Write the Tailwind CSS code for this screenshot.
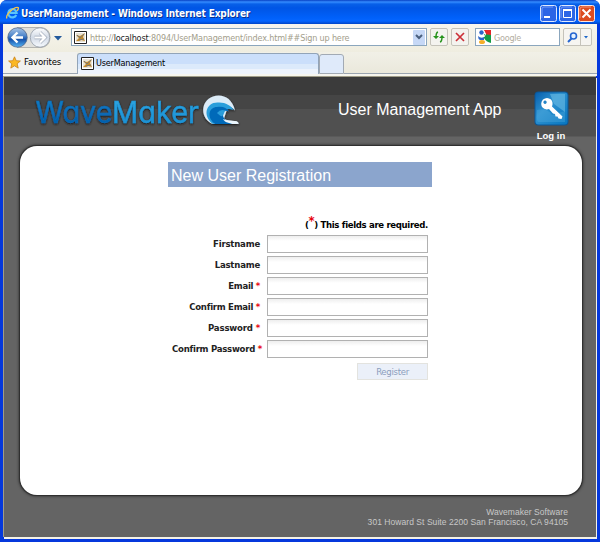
<!DOCTYPE html>
<html lang="en">
<head>
<meta charset="utf-8">
<title>UserManagement</title>
<script src="https://cdn.jsdelivr.net/npm/@tailwindcss/browser@4"></script>
</head>
<body class="w-[600px] h-[542px] overflow-hidden bg-white">
<svg class="hidden">
  <defs>
    <symbol id="ie" viewBox="0 0 14 14">
      <path d="M11 9.2A4.500 4.500 0 1 1 11.400 6.800H4" fill="none" stroke="#5bc4fa" stroke-width="2.400"/>
      <path d="M1 13C-1 9 9 0 13 1.200c1 .8-.2 2.400-1.200 3.300" fill="none" stroke="#f3c34c" stroke-width="1.400"/>
    </symbol>
    <symbol id="page" viewBox="0 0 13 13">
      <path d="M.5.5h12v12H.5z" fill="#fff" stroke="#222"/>
      <path d="M2 2h9v9H2z" fill="#e7e2d5"/>
      <path d="M2 10l3-3-3-3 4 1 5-3-2 4 2 4-4-1-2 1z" fill="#c58b28"/>
      <path d="M3 4l3 3 4-4M5 9l5-1" fill="none" stroke="#777" stroke-width="1"/>
    </symbol>
  </defs>
</svg>
<div class="w-[600px] h-[542px] flex flex-col rounded-t-[7px] overflow-hidden bg-[#0831d9] font-['DejaVu_Sans_Condensed','Noto_Sans',sans-serif]">
  <!-- Title bar -->
  <header class="h-6 shrink-0 flex items-center pl-[6px] pr-[5px] bg-[linear-gradient(#0741c4_0,#358cff_2px,#0860e8_4px,#0055e5_8px,#0061fb_18px,#0666ff_21px,#0145c8_24px)]">
    <svg class="w-[13px] h-[14px] mt-[2px]"><use href="#ie"/></svg>
    <h1 class="ml-[2px] mt-[4px] text-[10px] leading-none font-bold text-white whitespace-nowrap -tracking-[0.150px] [text-shadow:1px_1px_0_#0a2f8c]">UserManagement - Windows Internet Explorer</h1>
    <div class="ml-auto mt-[3px] flex gap-[2px]">
      <svg class="w-[17px] h-[17px]" viewBox="0 0 17 17"><rect x=".5" y=".5" width="16" height="16" rx="2" fill="#2c65e6" stroke="#dfe9ff"/><path d="M2 13V4q0-2 2-2h9" fill="none" stroke="#739cf6"/><path d="M4 11h6v2H4z" fill="#fff"/></svg>
      <svg class="w-[17px] h-[17px]" viewBox="0 0 17 17"><rect x=".5" y=".5" width="16" height="16" rx="2" fill="#2c65e6" stroke="#dfe9ff"/><path d="M2 13V4q0-2 2-2h9" fill="none" stroke="#739cf6"/><path d="M4.500 4.500h8v8h-8z" fill="none" stroke="#fff"/><path d="M4 4h9v2H4z" fill="#fff"/></svg>
      <svg class="w-[17px] h-[17px]" viewBox="0 0 17 17"><rect x=".5" y=".5" width="16" height="16" rx="2" fill="#dc4c20" stroke="#ffe5dd"/><path d="M2 13V4q0-2 2-2h9" fill="none" stroke="#ef9274"/><path d="M4.500 4.500l8 8M12.500 4.500l-8 8" stroke="#fff" stroke-width="2"/></svg>
    </div>
  </header>
  <div class="flex-1 min-h-0 flex flex-col border-x-[3px] border-b-[3px] border-[#0538dc]">
    <!-- Address bar -->
    <div class="h-[28px] shrink-0 flex items-start pt-[4px] pl-[4px] pr-[5px] bg-[linear-gradient(#f8f6ee,#efede0)]">
      <svg class="w-[54px] h-[22px] -mt-[1px]" viewBox="0 0 54 22">
        <defs>
          <linearGradient id="b1" x2="0" y2="1"><stop stop-color="#a8c4e6"/><stop offset=".4" stop-color="#5288cc"/><stop offset=".6" stop-color="#1653ac"/><stop offset="1" stop-color="#58b6f4"/></linearGradient>
          <linearGradient id="b2" x2="0" y2="1"><stop stop-color="#fff"/><stop offset=".5" stop-color="#d2dae6"/><stop offset="1" stop-color="#f7fafe"/></linearGradient>
        </defs>
        <path d="M10 .5h24q9 1 9 10t-9 10H10" fill="#e0e0dc" stroke="#b4b4b0"/>
        <circle cx="10.500" cy="10.500" r="9.700" fill="url(#b1)" stroke="#4c648c" stroke-width=".8"/>
        <circle cx="33" cy="10.500" r="9.700" fill="url(#b2)" stroke="#929caa" stroke-width=".8"/>
        <path d="M16 10.500H6M10.500 5.500l-5 5 5 5" fill="none" stroke="#fff" stroke-width="2.400"/>
        <path d="M27.500 10.500h10M33 5.500l5 5-5 5" fill="none" stroke="#9ca6b6" stroke-width="3.400"/>
        <path d="M27.500 10.500h10M33 5.500l5 5-5 5" fill="none" stroke="#fff" stroke-width="2.200"/>
      </svg>
      <svg class="-ml-[7px] mt-[8px] w-[8px] h-[5px]" viewBox="0 0 8 5"><path d="M0 0h8L4 4.600z" fill="#245a9c"/></svg>
      <div class="ml-[9px] w-[356px] h-[18px] border border-[#8ba6bd] bg-white flex items-center pl-[2px] text-[9px] text-[#a39e8b] whitespace-nowrap">
        <svg class="w-[13px] h-[13px]"><use href="#page"/></svg>
        <span class="ml-[3px] mt-[2px] leading-none -tracking-[0.170px]">http://<span class="text-[#222]">localhost</span>:8094/UserManagement/index.html##Sign up here</span>
        <span class="ml-auto mr-[1px] w-[12px] h-[15px] rounded-[1px] bg-[#c6d8f6] flex items-center justify-center"><svg class="w-[8px] h-[6px]" viewBox="0 0 8 6"><path d="M1 1l3 3 3-3" fill="none" stroke="#4a607e" stroke-width="2"/></svg></span>
      </div>
      <div class="ml-[3px] w-[18px] h-[18px] rounded-[2px] border border-[#c5c3ba] bg-[#f4f3ef] flex items-center justify-center">
        <svg class="w-[12px] h-[12px]" viewBox="0 0 12 12"><path d="M5 1Q3 1.500 3 6M7 11q2-.5 2-5" fill="none" stroke="#27941c" stroke-width="1.500"/><path d="M0 5h6L3 8zM6 7h6L9 4z" fill="#27941c"/></svg>
      </div>
      <div class="ml-[3px] w-[18px] h-[18px] rounded-[2px] border border-[#c5c3ba] bg-[#f4f3ef] flex items-center justify-center">
        <svg class="w-[10px] h-[10px]" viewBox="0 0 10 10"><path d="M1 1l8 8M9 1L1 9" stroke="#cc3038" stroke-width="1.700"/></svg>
      </div>
      <div class="ml-[6px] w-[85px] h-[18px] border border-[#8ba6bd] bg-white flex items-center pl-[2px] text-[9px] text-[#b2ada0]">
        <svg class="w-[13px] h-[14px]" viewBox="0 0 13 14"><path d="M6 0h7v5H8z" fill="#e42729"/><path d="M6 4l7 1v8q-5-1-7-5z" fill="#149b45"/><circle cx="3.500" cy="2.500" r="2.200" fill="#2a64c8"/><path d="M0 6q3 3 6 1v3H2q-2-1-2-4" fill="#2a64c8"/><ellipse cx="4" cy="12" rx="3" ry="2" fill="#f5ae28"/><path d="M6 1q3 3 0 6" fill="none" stroke="#fff"/></svg>
        <span class="ml-[3px] mt-[2px] leading-none -tracking-[0.250px]">Google</span>
      </div>
      <div class="ml-[3px] w-[29px] h-[18px] rounded-[2px] border border-[#c5c3ba] bg-[#f6f5f1] flex">
        <span class="w-[17px] border-r border-[#c5c3ba] flex items-center justify-center"><svg class="w-[11px] h-[11px]" viewBox="0 0 11 11"><circle cx="6.500" cy="4" r="3" fill="#e4f1ff" stroke="#2565d0" stroke-width="1.600"/><path d="M4.500 6.500L1 10" stroke="#2565d0" stroke-width="2"/></svg></span>
        <span class="flex-1 flex items-center justify-center"><svg class="w-[4px] h-[3px]" viewBox="0 0 4 3"><path d="M0 0h4L2 2.500z" fill="#1d66c8"/></svg></span>
      </div>
    </div>
    <!-- Tab strip -->
    <div class="h-[24px] shrink-0 flex items-end bg-[linear-gradient(#f1f0e7,#eae8db)] text-[9.500px] text-black border-b-2 border-[#f6f5ee]">
      <div class="w-[74px] h-full flex items-center pl-[5px] border-b border-[#9ba5b0] bg-[#f1f1ee]">
        <svg class="w-[13px] h-[13px] -mt-[1px]" viewBox="0 0 13 13"><path d="M6.500.8l1.700 3.900 4.200.3-3.200 2.800 1 4.300-3.700-2.300-3.700 2.300 1-4.300L.6 5l4.200-.3z" fill="#fbb823" stroke="#c98216" stroke-width=".8"/></svg>
        <span class="ml-[3px] -tracking-[0.150px] leading-none -mt-[1px] text-[9.500px]">Favorites</span>
      </div>
      <div class="w-[242px] h-[21px] rounded-t-[3px] border border-b-0 border-[#92a4b8] bg-[linear-gradient(#cbdffb_0_10px,#dceafb_10px_15px,#edf3fc_15px)] flex items-center pl-[3px]">
        <svg class="w-[13px] h-[13px] -mt-[2px]"><use href="#page"/></svg>
        <span class="ml-[2px] -mt-[2px] text-[9px] -tracking-[0.200px] leading-none">UserManagement</span>
      </div>
      <div class="w-[25px] h-[20px] rounded-t-[3px] border border-[#a2aab4] bg-[#dfeafa]"></div>
      <div class="flex-1 h-full border-b border-[#9ba5b0]"></div>
    </div>
    <!-- Web page -->
    <main class="flex-1 min-h-0 flex flex-col mr-[1px] mb-[2px] border-l border-t border-[#a09d88] bg-[linear-gradient(#3b3b3b_0_18px,#454545_18px_32px,#505050_32px_59px,#646464_60px)] [box-shadow:1px_2px_0_#f4f2e8] font-['Liberation_Sans',sans-serif]">
      <div class="h-[69px] shrink-0 flex">
        <svg class="w-[240px] h-[69px]" viewBox="4 77 240 69">
          <defs>
            <linearGradient id="lg1" x2="0" y2="1"><stop stop-color="#1686cc"/><stop offset=".7" stop-color="#0562af"/></linearGradient>
            <linearGradient id="lg2" x2="0" y2="1"><stop stop-color="#31a9e4"/><stop offset="1" stop-color="#168bd0"/></linearGradient>
            <filter id="sh" x="-10%" y="-20%" width="120%" height="140%"><feDropShadow dx="0" dy="1" stdDeviation="1.200" flood-color="#151515"/></filter>
          </defs>
          <g class="[font-feature-settings:'cv11']" filter="url(#sh)" font-family="Inter, sans-serif" font-size="30">
            <text x="35.500" y="123" fill="url(#lg1)" stroke="#0969b4" stroke-width=".5" textLength="77" lengthAdjust="spacingAndGlyphs">Wave</text>
            <text x="112" y="123" fill="url(#lg2)" stroke="#1d93d4" stroke-width=".5" textLength="87" lengthAdjust="spacingAndGlyphs">Maker</text>
          </g>
          <g filter="url(#sh)">
            <path d="M213 124C200 119 200 101 213 96.500c9-3 19 1 22 14-2-2-4-4-7-4l-4 12c5 4 14 1 14.500 4.500v1z" fill="#dcebf7"/>
            <path d="M213 124C202 116 206 102 218 102.500c7-.5 13 3 15.500 7.500-5-2-8-1-9 2l-4 10z" fill="#2a9edb"/>
            <path d="M215 124C206 117 209 107 217 107c6-1 10 1 12 4.500-4-1.500-7-.5-6.500 2.500.5 4 3 7 10 10z" fill="#056bb9"/>
            <path d="M217 113q4-5 9-2-4 0-3 4-1 3-6-2" fill="#2a9edb"/>
            <path d="M223 119c4 3 15 0 15.500 4.500-6 1-14-.5-15.500-4.500" fill="#eaf5fc"/>
          </g>
        </svg>
        <h2 class="ml-[94px] mt-[23px] text-[16px] leading-[20px] text-white whitespace-nowrap -tracking-[0.010px]">User Management App</h2>
        <div class="ml-auto mr-[25px] mt-[14px] w-[40px] flex flex-col items-center">
          <svg class="w-[35px] h-[35px]" viewBox="0 0 35 35">
            <defs><linearGradient id="kg" x2="1" y2="1"><stop stop-color="#075fae"/><stop offset=".4" stop-color="#2d91cf"/><stop offset="1" stop-color="#0876bf"/></linearGradient></defs>
            <rect x=".5" y=".5" width="34" height="34" rx="4" fill="#0b5798"/>
            <rect x="1.500" y="1.500" width="32" height="32" rx="3" fill="url(#kg)"/>
            <path d="M16 3h15v18L20 13z" fill="#65b8e4" opacity=".65"/>
            <path d="M3 19q10-3 15 5l13-4v11H5q-2 0-2-3z" fill="#61b5e3" opacity=".3"/>
            <path fill-rule="evenodd" d="M9 8.500q4-3 8 0 2.500 3 1 7l10.500 10-1 2.500-3-.5-1-2-2 0-.5-2.500-2-.5-4-4.500q-4 1.500-7-2-2-4 1-7.500m2 1a1.700 1.700 0 1 0 .1 0" fill="#fff"/>
          </svg>
          <span class="mt-[4px] text-[9.500px] leading-[11px] font-bold text-white whitespace-nowrap tracking-[0px]">Log in</span>
        </div>
      </div>
      <section class="ml-[16px] mr-[14px] h-[349px] shrink-0 rounded-[17px] bg-white [box-shadow:0_0_0_1px_#303030,0_0_3px_1px_#252525] pl-[148px] pt-[16px]">
        <h3 class="w-[264px] h-[25px] bg-[#8ba5cd] pl-[3px] text-[16px] leading-[27px] text-white whitespace-nowrap tracking-[0px]">New User Registration</h3>
        <form class="w-[260px] mt-[29px] flex flex-col text-[9.500px] font-bold text-[#222] font-['DejaVu_Sans_Condensed',sans-serif] leading-[18px] whitespace-nowrap">
          <p class="h-[19px] text-right text-black -tracking-[0.330px]">(<span class="relative -top-[3px] text-[13px] leading-none text-red-600">*</span>) This fields are required.</p>
          <div class="flex flex-col gap-[3px]">
            <label class="flex h-[18px]"><span class="w-[92px] text-right -tracking-[0.200px]">Firstname</span><input class="ml-auto w-[161px] h-[18px] border border-[#b1b1b1] bg-[linear-gradient(#eeeeee,#fff_5px)]"></label>
            <label class="flex h-[18px]"><span class="w-[92px] text-right -tracking-[0.200px]">Lastname</span><input class="ml-auto w-[161px] h-[18px] border border-[#b1b1b1] bg-[linear-gradient(#eeeeee,#fff_5px)]"></label>
            <label class="flex h-[18px]"><span class="w-[92px] text-right -tracking-[0.300px]">Email <b class="text-red-600">*</b></span><input class="ml-auto w-[161px] h-[18px] border border-[#b1b1b1] bg-[linear-gradient(#eeeeee,#fff_5px)]"></label>
            <label class="flex h-[18px]"><span class="w-[92px] text-right -tracking-[0.270px]">Confirm Email <b class="text-red-600">*</b></span><input class="ml-auto w-[161px] h-[18px] border border-[#b1b1b1] bg-[linear-gradient(#eeeeee,#fff_5px)]"></label>
            <label class="flex h-[18px]"><span class="w-[92px] text-right -tracking-[0.150px]">Password <b class="text-red-600">*</b></span><input class="ml-auto w-[161px] h-[18px] border border-[#b1b1b1] bg-[linear-gradient(#eeeeee,#fff_5px)]"></label>
            <label class="flex h-[18px]"><span class="w-[94px] text-right -tracking-[0.250px]">Confirm Password <b class="text-red-600">*</b></span><input class="ml-auto w-[161px] h-[18px] border border-[#b1b1b1] bg-[linear-gradient(#eeeeee,#fff_5px)]"></label>
          </div>
          <button type="button" class="self-end mt-[5px] w-[71px] h-[17px] border border-[#e3e3df] bg-[#ebf0f9] text-[9.500px] leading-[15px] font-normal text-[#8b9ebd] -tracking-[0.300px]">Register</button>
        </form>
      </section>
      <footer class="pr-[28px] pt-[12px] text-right text-[8.500px] leading-[10px] text-[#c8c8c8] tracking-[0.050px] whitespace-nowrap">Wavemaker Software<br>301 Howard St Suite 2200 San Francisco, CA 94105</footer>
    </main>
  </div>
</div>
</body>
</html>
